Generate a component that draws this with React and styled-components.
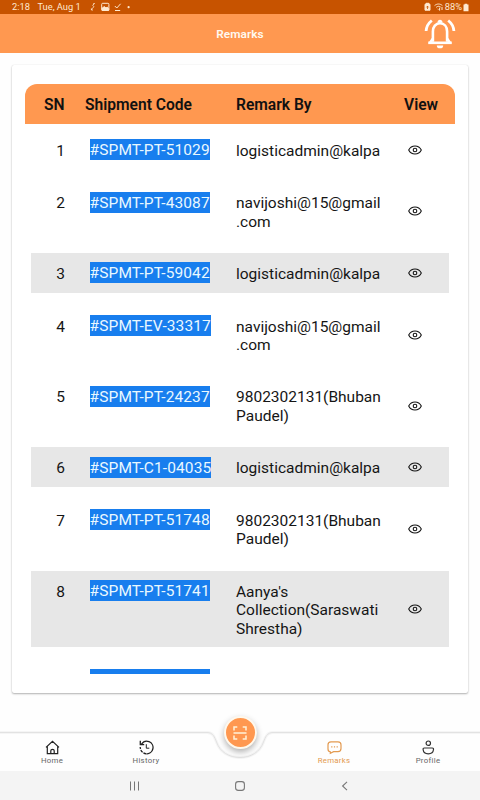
import styled, { createGlobalStyle } from 'styled-components'

const remarks = [
  { code: '#SPMT-PT-51029', by: ['logisticadmin@kalpa'] },
  { code: '#SPMT-PT-43087', by: ['navijoshi@15@gmail', '.com'] },
  { code: '#SPMT-PT-59042', by: ['logisticadmin@kalpa'], shaded: true },
  { code: '#SPMT-EV-33317', by: ['navijoshi@15@gmail', '.com'] },
  { code: '#SPMT-PT-24237', by: ['9802302131(Bhuban', 'Paudel)'] },
  { code: '#SPMT-C1-04035', by: ['logisticadmin@kalpa'], shaded: true },
  { code: '#SPMT-PT-51748', by: ['9802302131(Bhuban', 'Paudel)'] },
  { code: '#SPMT-PT-51741', by: ["Aanya's", 'Collection(Saraswati', 'Shrestha)'], shaded: true },
  { code: '#SPMT-PT-51739', by: ['9802302131(Bhuban', 'Paudel)'] },
]

function App() {
  return (
    <Screen>
      <GlobalStyle />
      <StatusBar>
        <Time>2:18</Time>
        <Day>Tue, Aug 1</Day>
        <StatusIcons />
        <Battery />
      </StatusBar>
      <Header>
        <Title>Remarks</Title>
        <BellIcon />
      </Header>
      <Content>
        <Card>
          <TableHead>
            <span>SN</span>
            <span>Shipment Code</span>
            <span>Remark By</span>
            <span>View</span>
          </TableHead>
          <List>
            {remarks.map((item, i) => (
              <Row key={item.code} $shaded={item.shaded}>
                <Number>{i + 1}</Number>
                <div>
                  <Code>{item.code}</Code>
                </div>
                <RemarkBy>
                  {item.by.map((line) => (
                    <div key={line}>{line}</div>
                  ))}
                </RemarkBy>
                <View>
                  <EyeIcon />
                </View>
              </Row>
            ))}
          </List>
        </Card>
      </Content>
      <TabBar>
        <TabShape />
        <Tab><HomeIcon />Home</Tab>
        <Tab><HistoryIcon />History</Tab>
        <ScanSlot>
          <ScanButton><ScanIcon /></ScanButton>
        </ScanSlot>
        <Tab $active><ChatIcon />Remarks</Tab>
        <Tab><ProfileIcon />Profile</Tab>
      </TabBar>
      <SystemNav>
        <svg width="10" height="10" viewBox="0 0 10 10" stroke="#777" strokeWidth="1">
          <path d="M.5 .5v9M4.5 .5v9M8.5 .5v9" />
        </svg>
        <svg width="10" height="10" viewBox="0 0 10 10" fill="none" stroke="#777" strokeWidth="1.1">
          <rect x=".6" y=".6" width="8.8" height="8.8" rx="2.6" />
        </svg>
        <svg width="10" height="10" viewBox="0 0 10 10" fill="none" stroke="#777" strokeWidth="1.1">
          <path d="M7 .8L2.6 5L7 9.2" />
        </svg>
      </SystemNav>
    </Screen>
  )
}

function StatusIcons() {
  return (
    <LeftIcons width="44" height="10" viewBox="0 0 44 10" fill="none" stroke="#ffe9d0" strokeWidth="1">
      <path d="M4.4 1.6L2.6 3.4L4 4.6L2.4 6.4L1.4 7.8M3.2 1.6H4.8M1.4 6.4V8H3" strokeWidth=".8" />
      <rect x="11.7" y="1.3" width="7.2" height="7.2" rx="1" />
      <path d="M12 8.4V6.3L14.3 4.6L16 6L17.2 5.1L18.7 6.7V8.4Z" fill="#ffe9d0" />
      <path d="M24.8 4L26.8 6L30.6 1.8M25 8.5H30.2" />
      <circle cx="38.6" cy="5.2" r="1.1" fill="#ffe9d0" stroke="none" />
    </LeftIcons>
  )
}

function Battery() {
  return (
    <BatteryBox>
      <svg width="20" height="10" viewBox="0 0 20 10" fill="none" stroke="#ffe9d0" strokeWidth="1">
        <path d="M2 1.3H5V2.3H6V8.2H1V2.3H2Z" fill="#ffe9d0" />
        <path d="M2.4 5.4L3.5 4.1L4.6 5.4M3.5 4.2V7" stroke="#c75300" strokeWidth=".8" />
        <path d="M10.6 3.6C13 1.5 16 1.5 18.4 3.6M12.2 5.3C13.8 4 15.3 4.1 16.6 5M14.3 7.6L13.6 6.8M15.6 5.6V8.6M18 5V8" />
      </svg>
      <span>88%</span>
      <svg width="6" height="9" viewBox="0 0 6 9" fill="#ffe9d0">
        <path d="M1.6 1.4V.7h2.6v.7h1.3v6.8H.5v-6.8Z" />
      </svg>
    </BatteryBox>
  )
}

function BellIcon() {
  return (
    <Bell width="32" height="32" viewBox="0 0 32 32" fill="none" stroke="#fff" strokeWidth="2.6">
      <path d="M8.9 23.8V13.4C8.9 8.7 11.7 5.2 16 5.2S23.1 8.7 23.1 13.4V23.8" />
      <path d="M4.2 24.8H27.8" />
      <path d="M6.2 24.4L8.8 20.8M25.8 24.4L23.2 20.8" />
      <path d="M13.4 4.8C13.4 .6 18.6 .6 18.6 4.8Z" fill="#fff" stroke="none" />
      <path d="M12.8 27.4H19.2A3.2 2.9 0 0 1 12.8 27.4Z" fill="#fff" stroke="none" />
      <path d="M7.8 2.5C4.6 5 2.4 8.5 2.1 13M24.2 2.5C27.4 5 29.6 8.5 29.9 13" strokeWidth="2.8" />
    </Bell>
  )
}

function EyeIcon() {
  return (
    <svg width="14" height="10" viewBox="0 0 14 10" fill="none" stroke="#151515" strokeWidth="1.1">
      <path d="M.7 5C3.4-.4 10.6-.4 13.3 5C10.6 10.4 3.4 10.4 .7 5Z" />
      <circle cx="7" cy="5" r="1.8" />
    </svg>
  )
}

function HomeIcon() {
  return (
    <svg width="15" height="15" viewBox="0 0 15 15" fill="none" stroke="#222" strokeWidth="1.2">
      <path d="M1 7.4L7.5 1.4L14 7.4M2.3 6.4V13.7H12.7V6.4M5.8 13.6V10.8C5.8 9 9.2 9 9.2 10.8V13.6" />
    </svg>
  )
}

function HistoryIcon() {
  return (
    <svg width="15" height="15" viewBox="0 0 15 15" fill="none" stroke="#222" strokeWidth="1.3">
      <path d="M2.5 4.2C4.4 1.3 7.5 .7 10 1.7C13.1 2.9 14.6 6 13.8 9C13.1 12 10.4 14 7.6 13.8" />
      <path d="M1.3 .8V4.6H5.2" />
      <path d="M7.4 13.8C3.8 13.4 1.4 10.9 1.2 7" strokeDasharray="3 1" />
      <path d="M7.3 4.2V8.2H10.3" strokeWidth="1" />
    </svg>
  )
}

function ChatIcon() {
  return (
    <svg width="15" height="15" viewBox="0 0 15 15" fill="none" stroke="#e39a50" strokeWidth="1.2">
      <path d="M3.3 11.8C1.7 11.7 1 10.7 1 9V4.8C1 2.7 2 1.8 4 1.8H11C13 1.8 14 2.7 14 4.8V8.6C14 10.6 13 11.7 11 11.7H6.6L3.3 13.3Z" />
      <path d="M4.2 6.8H5.4M6.9 6.8H8.1M9.6 6.8H10.8" />
    </svg>
  )
}

function ProfileIcon() {
  return (
    <svg width="15" height="15" viewBox="0 0 15 15" fill="none" stroke="#333" strokeWidth="1.2">
      <circle cx="7.3" cy="3.2" r="2.2" />
      <path d="M3.4 8H11.2C12.3 8 12.6 8.6 12.5 9.5C12.2 12.5 10.5 13.8 7.3 13.8S2.4 12.5 2.1 9.5C2 8.6 2.3 8 3.4 8Z" />
    </svg>
  )
}

function ScanIcon() {
  return (
    <svg width="16" height="14" viewBox="0 0 16 14" fill="none" stroke="#fff2d8" strokeWidth="1.5">
      <path d="M2 4.4V1H5.3M10.7 1H14V4.4M14 9.6V13H10.7M5.3 13H2V9.6M1.5 7H14.5" />
    </svg>
  )
}

// top edge of the tab bar, dipping under the scan button
function TabShape() {
  const edge = 'M0 7.5H207C213 7.5 214.5 12 216.5 17C220 27 229 32.5 240 32.5S260 27 263.5 17C265.5 12 267 7.5 273 7.5H480'
  return (
    <Shape width="480" height="40" viewBox="0 0 480 40" fill="none">
      <path d={edge} stroke="#f5f5f5" strokeWidth="3" />
      <path d={edge} stroke="#e2e2e2" strokeWidth="1" />
    </Shape>
  )
}

const GlobalStyle = createGlobalStyle`
  body {
    margin: 0;
    background: #fff;
  }

  * {
    box-sizing: border-box;
  }

  svg {
    display: block;
    flex-shrink: 0;
  }
`

const Screen = styled.div`
  display: flex;
  flex-direction: column;
  width: 480px;
  height: 800px;
  overflow: hidden;
  background: #fefefe;
  color: #151515;
  font-family: Roboto, sans-serif;
`

const StatusBar = styled.div`
  display: flex;
  align-items: center;
  height: 14px;
  padding: 0 11px 0 12px;
  background: #c75300;
  color: #ffe9d0;
  font-size: 9.3px;
  line-height: 14px;
`

const Time = styled.span`
  width: 25.5px;
`

const Day = styled.span`
  width: 52px;
  white-space: nowrap;
`

const LeftIcons = styled.svg`
  margin-right: auto;
`

const BatteryBox = styled.div`
  display: flex;
  align-items: center;
  gap: 1px;
`

const Header = styled.header`
  display: grid;
  grid-template-columns: 1fr auto 1fr;
  align-items: center;
  height: 39px;
  padding: 0 24px;
  background: #ff9850;
`

const Title = styled.h1`
  grid-column: 2;
  margin: 1px 0 0;
  color: #fff9ef;
  font-size: 11.8px;
  font-weight: 600;
  letter-spacing: 0.05px;
`

const Bell = styled.svg`
  justify-self: end;
`

const Content = styled.main`
  flex: 1;
  padding: 12px 12px 0;
`

const Card = styled.section`
  height: 628px;
  padding: 19px 13px;
  background: #fff;
  border-radius: 2px;
  box-shadow: 0 1px 2px rgba(0, 0, 0, 0.3), 0 0 1px rgba(0, 0, 0, 0.12);
`

const TableHead = styled.div`
  display: grid;
  grid-template-columns: 41px 151px 168px 1fr;
  align-items: center;
  height: 40px;
  padding: 1px 0 0 19px;
  border-radius: 12px 12px 0 0;
  background: #ff9850;
  color: #111;
  font-size: 15.6px;
  font-weight: 600;
`

const List = styled.div`
  display: flex;
  flex-direction: column;
  gap: 12.7px;
  height: 550px;
  padding: 5.8px 6px 0;
  overflow: hidden;
`

const Row = styled.div`
  display: grid;
  grid-template-columns: 59px 146px 158px 1fr;
  flex-shrink: 0;
  padding: 11.9px 0 9.5px;
  background: ${(props) => (props.$shaded ? '#e7e7e7' : 'transparent')};
  font-size: 15.5px;
  line-height: 18.4px;
`

const Number = styled.div`
  text-align: center;
`

const Code = styled.span`
  display: inline-block;
  height: 21px;
  margin: -2.6px 0 -1px -0.4px;
  background: #187eee;
  color: #e9f8ff;
  line-height: 23.4px;
  letter-spacing: 0.1px;
  vertical-align: top;
`

const RemarkBy = styled.div`
  white-space: nowrap;
`

const View = styled.div`
  display: flex;
  align-items: center;
  padding: 0 0 2.4px 14.4px;
`

const TabBar = styled.nav`
  position: relative;
  display: grid;
  grid-template-columns: 104px 84px 104px 84px 104px;
  height: 46px;
`

const Shape = styled.svg`
  position: absolute;
  top: 0;
  left: 0;
`

const Tab = styled.div`
  display: flex;
  flex-direction: column;
  align-items: center;
  gap: 0.5px;
  padding-top: 15px;
  color: ${(props) => (props.$active ? '#e39a50' : '#666')};
  font-size: 7.8px;
  line-height: 10px;
  letter-spacing: 0.3px;
`

const ScanSlot = styled.div`
  display: flex;
  justify-content: center;
`

const ScanButton = styled.div`
  position: relative;
  display: flex;
  align-items: center;
  justify-content: center;
  width: 33px;
  height: 33px;
  margin-top: -9px;
  border: 2px solid #fff8ec;
  border-radius: 50%;
  background: #ff9850;
  box-shadow: 0 3px 6px rgba(0, 0, 0, 0.3);
`

const SystemNav = styled.div`
  display: flex;
  justify-content: center;
  align-items: center;
  gap: 95px;
  height: 29px;
  padding-right: 1px;
  background: #f4f4f4;
`

export default App
